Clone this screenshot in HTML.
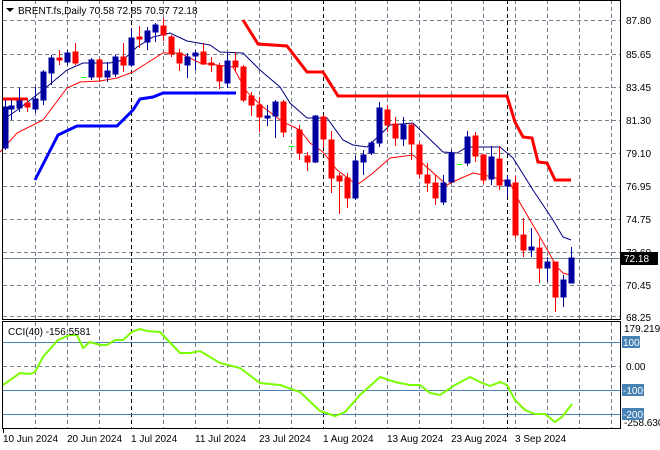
<!DOCTYPE html>
<html><head><meta charset="utf-8"><style>
html,body{margin:0;padding:0;background:#fff;}
svg{display:block;font-family:"Liberation Sans",sans-serif;}
</style></head><body>
<svg width="660" height="450" viewBox="0 0 660 450" xmlns="http://www.w3.org/2000/svg">
<rect width="660" height="450" fill="#fff"/>
<!-- grid main -->
<g stroke="#75808c" stroke-width="1" stroke-dasharray="4,3" shape-rendering="crispEdges">
<line x1="3" x2="620" y1="20.5" y2="20.5"/><line x1="3" x2="620" y1="54.5" y2="54.5"/><line x1="3" x2="620" y1="87.5" y2="87.5"/><line x1="3" x2="620" y1="120.5" y2="120.5"/><line x1="3" x2="620" y1="153.5" y2="153.5"/><line x1="3" x2="620" y1="186.5" y2="186.5"/><line x1="3" x2="620" y1="219.5" y2="219.5"/><line x1="3" x2="620" y1="252.5" y2="252.5"/><line x1="3" x2="620" y1="285.5" y2="285.5"/><line x1="3" x2="620" y1="316.5" y2="316.5"/>
<line x1="3" x2="620" y1="366.5" y2="366.5"/>
<g id="vg">
<line x1="35.5" x2="35.5" y1="0" y2="320"/><line x1="67.5" x2="67.5" y1="0" y2="320"/><line x1="99.5" x2="99.5" y1="0" y2="320"/><line x1="163.5" x2="163.5" y1="0" y2="320"/><line x1="195.5" x2="195.5" y1="0" y2="320"/><line x1="227.5" x2="227.5" y1="0" y2="320"/><line x1="259.5" x2="259.5" y1="0" y2="320"/><line x1="291.5" x2="291.5" y1="0" y2="320"/><line x1="355.5" x2="355.5" y1="0" y2="320"/><line x1="387.5" x2="387.5" y1="0" y2="320"/><line x1="419.5" x2="419.5" y1="0" y2="320"/><line x1="451.5" x2="451.5" y1="0" y2="320"/><line x1="483.5" x2="483.5" y1="0" y2="320"/><line x1="515.5" x2="515.5" y1="0" y2="320"/><line x1="547.5" x2="547.5" y1="0" y2="320"/><line x1="579.5" x2="579.5" y1="0" y2="320"/><line x1="611.5" x2="611.5" y1="0" y2="320"/>
</g>
<g transform="translate(0,322)">
<line x1="35.5" x2="35.5" y1="0" y2="107"/><line x1="67.5" x2="67.5" y1="0" y2="107"/><line x1="99.5" x2="99.5" y1="0" y2="107"/><line x1="163.5" x2="163.5" y1="0" y2="107"/><line x1="195.5" x2="195.5" y1="0" y2="107"/><line x1="227.5" x2="227.5" y1="0" y2="107"/><line x1="259.5" x2="259.5" y1="0" y2="107"/><line x1="291.5" x2="291.5" y1="0" y2="107"/><line x1="355.5" x2="355.5" y1="0" y2="107"/><line x1="387.5" x2="387.5" y1="0" y2="107"/><line x1="419.5" x2="419.5" y1="0" y2="107"/><line x1="451.5" x2="451.5" y1="0" y2="107"/><line x1="483.5" x2="483.5" y1="0" y2="107"/><line x1="515.5" x2="515.5" y1="0" y2="107"/><line x1="547.5" x2="547.5" y1="0" y2="107"/><line x1="579.5" x2="579.5" y1="0" y2="107"/><line x1="611.5" x2="611.5" y1="0" y2="107"/>
</g>
</g>
<g stroke="#000" stroke-width="1" stroke-dasharray="4,3" shape-rendering="crispEdges">
<line x1="131.5" x2="131.5" y1="0" y2="320"/><line x1="323.5" x2="323.5" y1="0" y2="320"/><line x1="507.5" x2="507.5" y1="0" y2="320"/>
<line x1="131.5" x2="131.5" y1="322" y2="429"/><line x1="323.5" x2="323.5" y1="322" y2="429"/><line x1="507.5" x2="507.5" y1="322" y2="429"/>
</g>
<!-- price line -->
<line x1="3" x2="620" y1="258.5" y2="258.5" stroke="#778899" stroke-width="1"/>
<!-- CCI levels -->
<g stroke="#4682b4" stroke-width="1" shape-rendering="crispEdges">
<line x1="3" x2="620" y1="342.5" y2="342.5"/><line x1="3" x2="620" y1="390.5" y2="390.5"/><line x1="3" x2="620" y1="414.5" y2="414.5"/>
</g>
<!-- thick lines -->
<polyline fill="none" stroke="#ff0000" stroke-width="3" points="3,99 27,99"/>
<polyline fill="none" stroke="#ff0000" stroke-width="3" points="243,20 258,44 287,46 307,72 323,72 338,96 507,96 515,122 523,137 532,138 538,162 547,163 555,180 571,180"/>
<polyline fill="none" stroke="#0000ff" stroke-width="3" points="35,180 58,135 77,126 117,126 133,110 140,99 153,97 163,93 236,93"/>
<!-- MAs -->
<polyline fill="none" stroke="#000080" stroke-width="1" points="3,120 20,108 43,90 67,70 83,63 110,63 123,60 137,47 153,37 170,33 187,41 210,45 220,52 243,53 260,70 280,87 290,103 307,118 327,118 343,140 353,145 367,147 380,135 390,125 413,123 443,152 457,153 467,147 500,147 513,158 533,190 553,220 563,237 571,240"/>
<polyline fill="none" stroke="#ff0000" stroke-width="1" points="0,152 17,133 43,120 67,88 80,82 100,81 117,78 133,72 147,63 163,53 180,53 200,63 233,67 247,92 263,107 283,122 300,130 310,143 323,152 337,170 357,185 373,173 390,158 413,155 447,185 457,180 473,173 493,177 510,183 520,203 540,237 557,267 563,273 570,275"/>
<!-- candles -->
<g stroke-width="1" shape-rendering="crispEdges">
<g stroke="#0000a0" fill="#0000a0">
<line x1="5.5" x2="5.5" y1="100" y2="150"/><rect x="3" y="107" width="5" height="41"/>
<line x1="11.5" x2="11.5" y1="100" y2="120"/><rect x="9" y="106" width="5" height="3"/>
<line x1="19.5" x2="19.5" y1="88" y2="112"/><rect x="17" y="101" width="5" height="7"/>
<line x1="35.5" x2="35.5" y1="87" y2="113"/><rect x="33" y="99" width="5" height="10"/>
<line x1="43.5" x2="43.5" y1="70" y2="105"/><rect x="41" y="72" width="5" height="28"/>
<line x1="51.5" x2="51.5" y1="55" y2="85"/><rect x="49" y="58" width="5" height="15"/>
<line x1="67.5" x2="67.5" y1="50" y2="65"/><rect x="65" y="53" width="5" height="9"/>
<line x1="91.5" x2="91.5" y1="58" y2="80"/><rect x="89" y="60" width="5" height="17"/>
<line x1="107.5" x2="107.5" y1="62" y2="82"/><rect x="105" y="71" width="5" height="6"/>
<line x1="115.5" x2="115.5" y1="55" y2="77"/><rect x="113" y="57" width="5" height="17"/>
<line x1="131.5" x2="131.5" y1="28" y2="67"/><rect x="129" y="38" width="5" height="27"/>
<line x1="147.5" x2="147.5" y1="27" y2="50"/><rect x="145" y="31" width="5" height="11"/>
<line x1="155.5" x2="155.5" y1="23" y2="42"/><rect x="153" y="25" width="5" height="7"/>
<line x1="187.5" x2="187.5" y1="53" y2="78"/><rect x="185" y="57" width="5" height="8"/>
<line x1="195.5" x2="195.5" y1="50" y2="70"/><rect x="193" y="53" width="5" height="3"/>
<line x1="227.5" x2="227.5" y1="52" y2="88"/><rect x="225" y="61" width="5" height="22"/>
<line x1="267.5" x2="267.5" y1="105" y2="126"/><rect x="265" y="116" width="5" height="2"/>
<line x1="275.5" x2="275.5" y1="100" y2="138"/><rect x="273" y="102" width="5" height="14"/>
<line x1="315.5" x2="315.5" y1="115" y2="163"/><rect x="313" y="116" width="5" height="46"/>
<line x1="355.5" x2="355.5" y1="156" y2="200"/><rect x="353" y="161" width="5" height="37"/>
<line x1="363.5" x2="363.5" y1="150" y2="175"/><rect x="361" y="155" width="5" height="7"/>
<line x1="371.5" x2="371.5" y1="141" y2="155"/><rect x="369" y="143" width="5" height="10"/>
<line x1="379.5" x2="379.5" y1="102" y2="147"/><rect x="377" y="108" width="5" height="35"/>
<line x1="403.5" x2="403.5" y1="117" y2="146"/><rect x="401" y="125" width="5" height="14"/>
<line x1="443.5" x2="443.5" y1="175" y2="205"/><rect x="441" y="183" width="5" height="19"/>
<line x1="451.5" x2="451.5" y1="150" y2="183"/><rect x="449" y="153" width="5" height="29"/>
<line x1="467.5" x2="467.5" y1="131" y2="166"/><rect x="465" y="137" width="5" height="26"/>
<line x1="491.5" x2="491.5" y1="146" y2="185"/><rect x="489" y="157" width="5" height="22"/>
<line x1="507.5" x2="507.5" y1="176" y2="197"/><rect x="505" y="180" width="5" height="6"/>
<line x1="531.5" x2="531.5" y1="228" y2="257"/><rect x="529" y="247" width="5" height="3"/>
<line x1="547.5" x2="547.5" y1="257" y2="282"/><rect x="545" y="262" width="5" height="6"/>
<line x1="563.5" x2="563.5" y1="275" y2="307"/><rect x="561" y="280" width="5" height="17"/>
<line x1="571.5" x2="571.5" y1="247" y2="283"/><rect x="569" y="258" width="5" height="25"/>
</g>
<g stroke="#ff0000" fill="#ff0000">
<line x1="27.5" x2="27.5" y1="98" y2="112"/><rect x="25" y="103" width="5" height="4"/>
<line x1="59.5" x2="59.5" y1="50" y2="65"/><rect x="57" y="58" width="5" height="2"/>
<line x1="75.5" x2="75.5" y1="43" y2="65"/><rect x="73" y="52" width="5" height="11"/>
<line x1="99.5" x2="99.5" y1="58" y2="82"/><rect x="97" y="60" width="5" height="17"/>
<line x1="123.5" x2="123.5" y1="43" y2="72"/><rect x="121" y="57" width="5" height="8"/>
<line x1="139.5" x2="139.5" y1="26" y2="48"/><rect x="137" y="37" width="5" height="2"/>
<line x1="163.5" x2="163.5" y1="18" y2="41"/><rect x="161" y="26" width="5" height="9"/>
<line x1="171.5" x2="171.5" y1="35" y2="57"/><rect x="169" y="37" width="5" height="17"/>
<line x1="179.5" x2="179.5" y1="49" y2="71"/><rect x="177" y="53" width="5" height="10"/>
<line x1="203.5" x2="203.5" y1="43" y2="65"/><rect x="201" y="52" width="5" height="12"/>
<line x1="211.5" x2="211.5" y1="57" y2="72"/><rect x="209" y="63" width="5" height="2"/>
<line x1="219.5" x2="219.5" y1="63" y2="89"/><rect x="217" y="66" width="5" height="15"/>
<line x1="235.5" x2="235.5" y1="52" y2="72"/><rect x="233" y="61" width="5" height="6"/>
<line x1="243.5" x2="243.5" y1="65" y2="102"/><rect x="241" y="67" width="5" height="33"/>
<line x1="251.5" x2="251.5" y1="92" y2="116"/><rect x="249" y="96" width="5" height="9"/>
<line x1="259.5" x2="259.5" y1="97" y2="132"/><rect x="257" y="105" width="5" height="12"/>
<line x1="283.5" x2="283.5" y1="100" y2="137"/><rect x="281" y="102" width="5" height="30"/>
<line x1="299.5" x2="299.5" y1="125" y2="160"/><rect x="297" y="130" width="5" height="23"/>
<line x1="307.5" x2="307.5" y1="152" y2="171"/><rect x="305" y="156" width="5" height="6"/>
<line x1="323.5" x2="323.5" y1="115" y2="148"/><rect x="321" y="117" width="5" height="22"/>
<line x1="331.5" x2="331.5" y1="131" y2="193"/><rect x="329" y="140" width="5" height="38"/>
<line x1="339.5" x2="339.5" y1="173" y2="214"/><rect x="337" y="176" width="5" height="5"/>
<line x1="347.5" x2="347.5" y1="173" y2="208"/><rect x="345" y="178" width="5" height="20"/>
<line x1="387.5" x2="387.5" y1="105" y2="132"/><rect x="385" y="110" width="5" height="15"/>
<line x1="395.5" x2="395.5" y1="117" y2="146"/><rect x="393" y="124" width="5" height="14"/>
<line x1="411.5" x2="411.5" y1="123" y2="160"/><rect x="409" y="125" width="5" height="19"/>
<line x1="419.5" x2="419.5" y1="142" y2="178"/><rect x="417" y="145" width="5" height="29"/>
<line x1="427.5" x2="427.5" y1="163" y2="192"/><rect x="425" y="175" width="5" height="8"/>
<line x1="435.5" x2="435.5" y1="175" y2="205"/><rect x="433" y="183" width="5" height="15"/>
<line x1="475.5" x2="475.5" y1="132" y2="162"/><rect x="473" y="136" width="5" height="20"/>
<line x1="483.5" x2="483.5" y1="154" y2="184"/><rect x="481" y="155" width="5" height="25"/>
<line x1="499.5" x2="499.5" y1="146" y2="190"/><rect x="497" y="159" width="5" height="26"/>
<line x1="515.5" x2="515.5" y1="176" y2="238"/><rect x="513" y="183" width="5" height="52"/>
<line x1="523.5" x2="523.5" y1="218" y2="257"/><rect x="521" y="235" width="5" height="15"/>
<line x1="539.5" x2="539.5" y1="238" y2="283"/><rect x="537" y="248" width="5" height="20"/>
<line x1="555.5" x2="555.5" y1="262" y2="312"/><rect x="553" y="262" width="5" height="35"/>
</g>
<g stroke="#00ff00"><line x1="81" x2="86" y1="77.5" y2="77.5"/><line x1="289" x2="294" y1="146.5" y2="146.5"/><line x1="457" x2="462" y1="164.5" y2="164.5"/></g>
</g>
<!-- CCI line -->
<polyline fill="none" stroke="#7cfc00" stroke-width="2" points="3,385 20,373 30,374 35,372 43,357 58,340 70,335 77,335 83,348 90,342 100,345 107,345 115,340 123,340 132,332 140,329 147,331 160,332 180,353 190,353 200,351 220,363 240,368 260,383 280,385 300,392 320,411 335,416 345,412 360,395 380,377 395,382 410,385 420,385 430,393 440,395 455,385 470,377 480,382 490,386 500,382 507,385 515,400 525,410 535,414 545,414 555,422 562,417 572,404"/>
<!-- borders -->
<g fill="none" stroke="#000" stroke-width="1" shape-rendering="crispEdges">
<rect x="2.5" y="0.5" width="618" height="319"/>
<rect x="2.5" y="321.5" width="618" height="107"/>
</g>
<!-- text -->
<g font-size="10" fill="#000">
<path d="M6,8 L14,8 L10,12 Z" fill="#000"/>
<text x="18" y="14">BRENT.fs,Daily  70.58 72.85 70.57 72.18</text>
<text x="8" y="335">CCI(40) -156.5581</text>
<text x="626" y="24">87.80</text><text x="626" y="58">85.65</text><text x="626" y="91">83.45</text><text x="626" y="124">81.30</text><text x="626" y="157">79.10</text><text x="626" y="190">76.95</text><text x="626" y="223">74.75</text><text x="626" y="256">72.60</text><text x="626" y="289">70.45</text><text x="626" y="321">68.25</text>
<text x="624" y="332">179.2195</text><text x="626" y="370">0.00</text><text x="624" y="426">-258.630</text>
</g>
<rect x="621" y="252" width="37" height="13" fill="#000"/>
<text x="624" y="262" font-size="10" fill="#fff">72.18</text>
<g font-size="10" fill="#fff">
<rect x="622" y="336" width="18" height="12" fill="#4682b4"/><text x="623" y="346">100</text>
<rect x="622" y="384" width="22" height="12" fill="#4682b4"/><text x="623" y="394">-100</text>
<rect x="622" y="408" width="22" height="12" fill="#4682b4"/><text x="623" y="418">-200</text>
</g>
<g font-size="10" fill="#000">
<line x1="3.5" x2="3.5" y1="429" y2="433" stroke="#000"/>
<text x="3" y="442">10 Jun 2024</text><text x="67" y="442">20 Jun 2024</text><text x="131" y="442">1 Jul 2024</text><text x="195" y="442">11 Jul 2024</text><text x="259" y="442">23 Jul 2024</text><text x="323" y="442">1 Aug 2024</text><text x="387" y="442">13 Aug 2024</text><text x="451" y="442">23 Aug 2024</text><text x="515" y="442">3 Sep 2024</text>
</g>
</svg>
</body></html>
